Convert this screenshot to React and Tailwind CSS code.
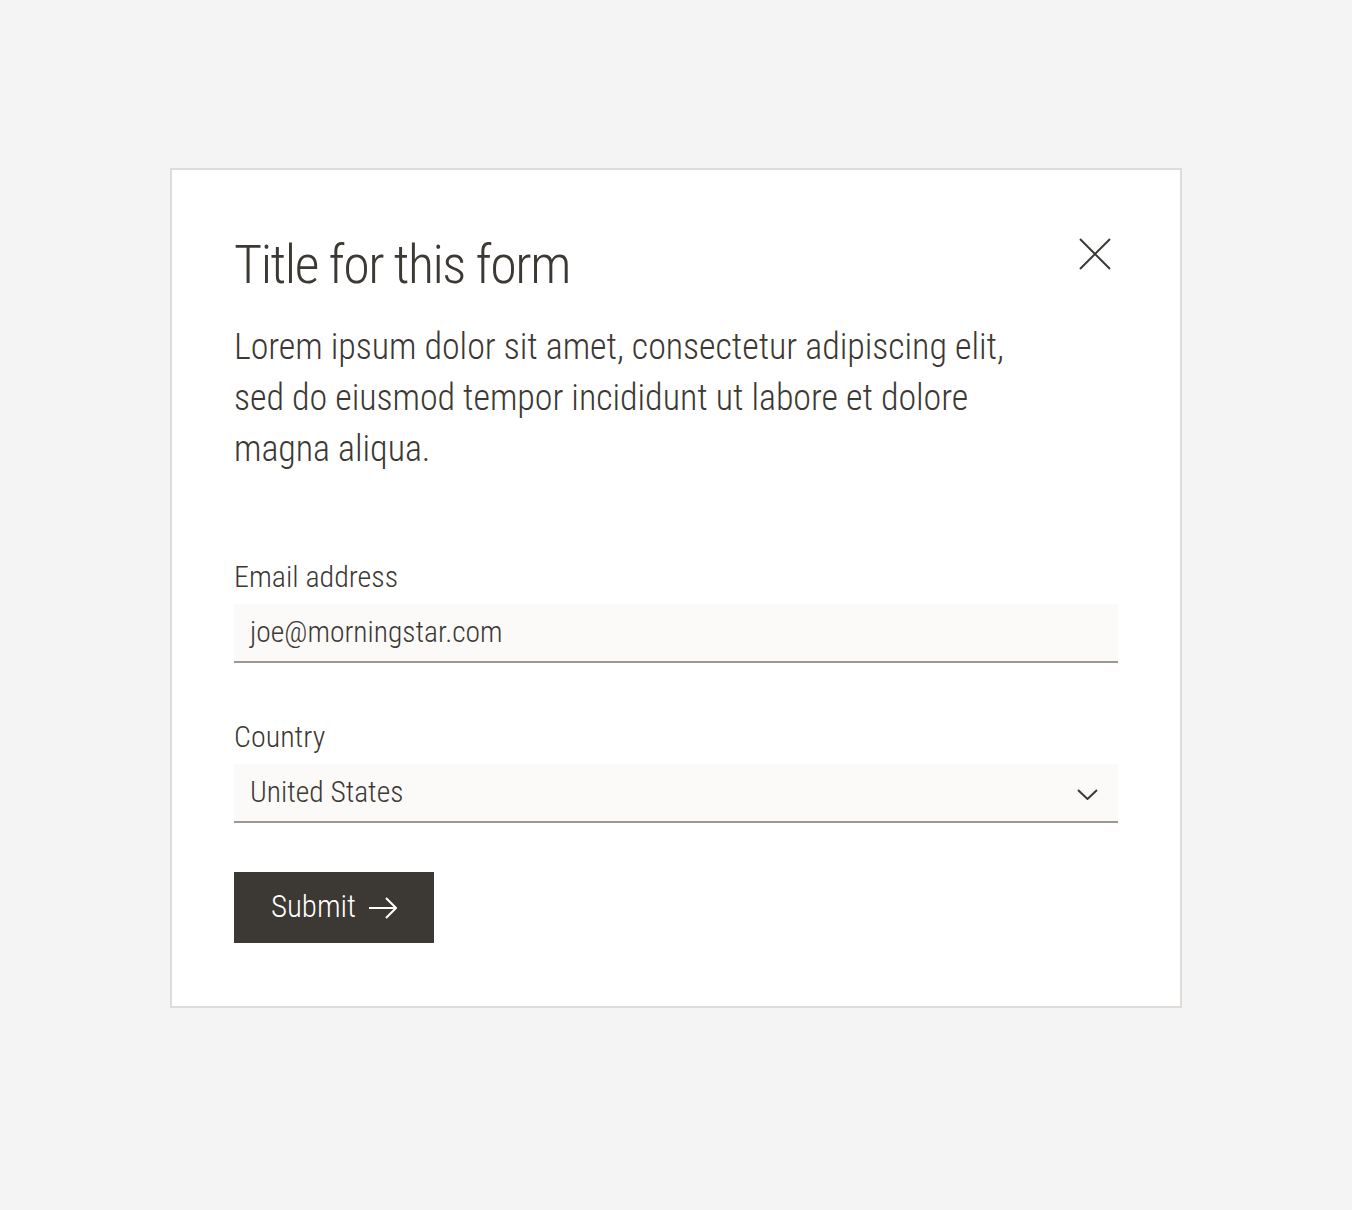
import React from "react";

export default function App() {
  return (
    <div className="min-h-[1210px] w-full bg-[#f4f4f4] pt-[168px] font-['Roboto_Condensed',sans-serif] font-light">
      <div className="mx-auto w-[1012px] border-2 border-[#dedbd8] bg-white px-[62px] pt-[63px] pb-[63px] text-[#3c3833]">
        <div className="flex items-start justify-between">
          <h1 className="text-[54px] leading-[64px] tracking-[-1.5px] font-light">Title for this form</h1>
          <button className="mt-[5px] mr-[7px] h-[32px] w-[32px] flex items-center justify-center">
            <svg width="32" height="32" viewBox="0 0 32 32" fill="none" stroke="#3c3833" strokeWidth="2">
              <path d="M1 1 L31 31 M31 1 L1 31" />
            </svg>
          </button>
        </div>
        <p className="mt-[25px] w-[800px] text-[36px] leading-[51px] tracking-[-0.05px]">
          Lorem ipsum dolor sit amet, consectetur adipiscing elit, sed do eiusmod tempor incididunt ut labore et dolore magna aliqua.
        </p>
        <div className="mt-[84px]">
          <label className="block text-[30px] leading-[36px]">Email address</label>
          <div className="mt-[9px] h-[59px] border-b-2 border-[#9b9893] bg-[#fbfaf8] px-[16px] flex items-center text-[29.5px]">
            joe@morningstar.com
          </div>
        </div>
        <div className="mt-[56px]">
          <label className="block text-[30px] leading-[36px]">Country</label>
          <div className="mt-[9px] h-[59px] border-b-2 border-[#9b9893] bg-[#fbfaf8] pl-[16px] pr-[20px] flex items-center justify-between text-[29.5px]">
            <span>United States</span>
            <svg className="mt-[3px]" width="21" height="11" viewBox="0 0 21 11" fill="none" stroke="#3c3833" strokeWidth="2">
              <path d="M1 1 L10.5 10 L20 1" />
            </svg>
          </div>
        </div>
        <button className="mt-[49px] h-[71px] w-[200px] bg-[#3c3833] text-white text-[31px] font-light flex items-center justify-center gap-[13px]">
          <span>Submit</span>
          <svg width="28" height="22" viewBox="0 0 28 22" fill="none" stroke="white" strokeWidth="2">
            <path d="M0 11 H27 M17 1 L27 11 L17 21" />
          </svg>
        </button>
      </div>
    </div>
  );
}
